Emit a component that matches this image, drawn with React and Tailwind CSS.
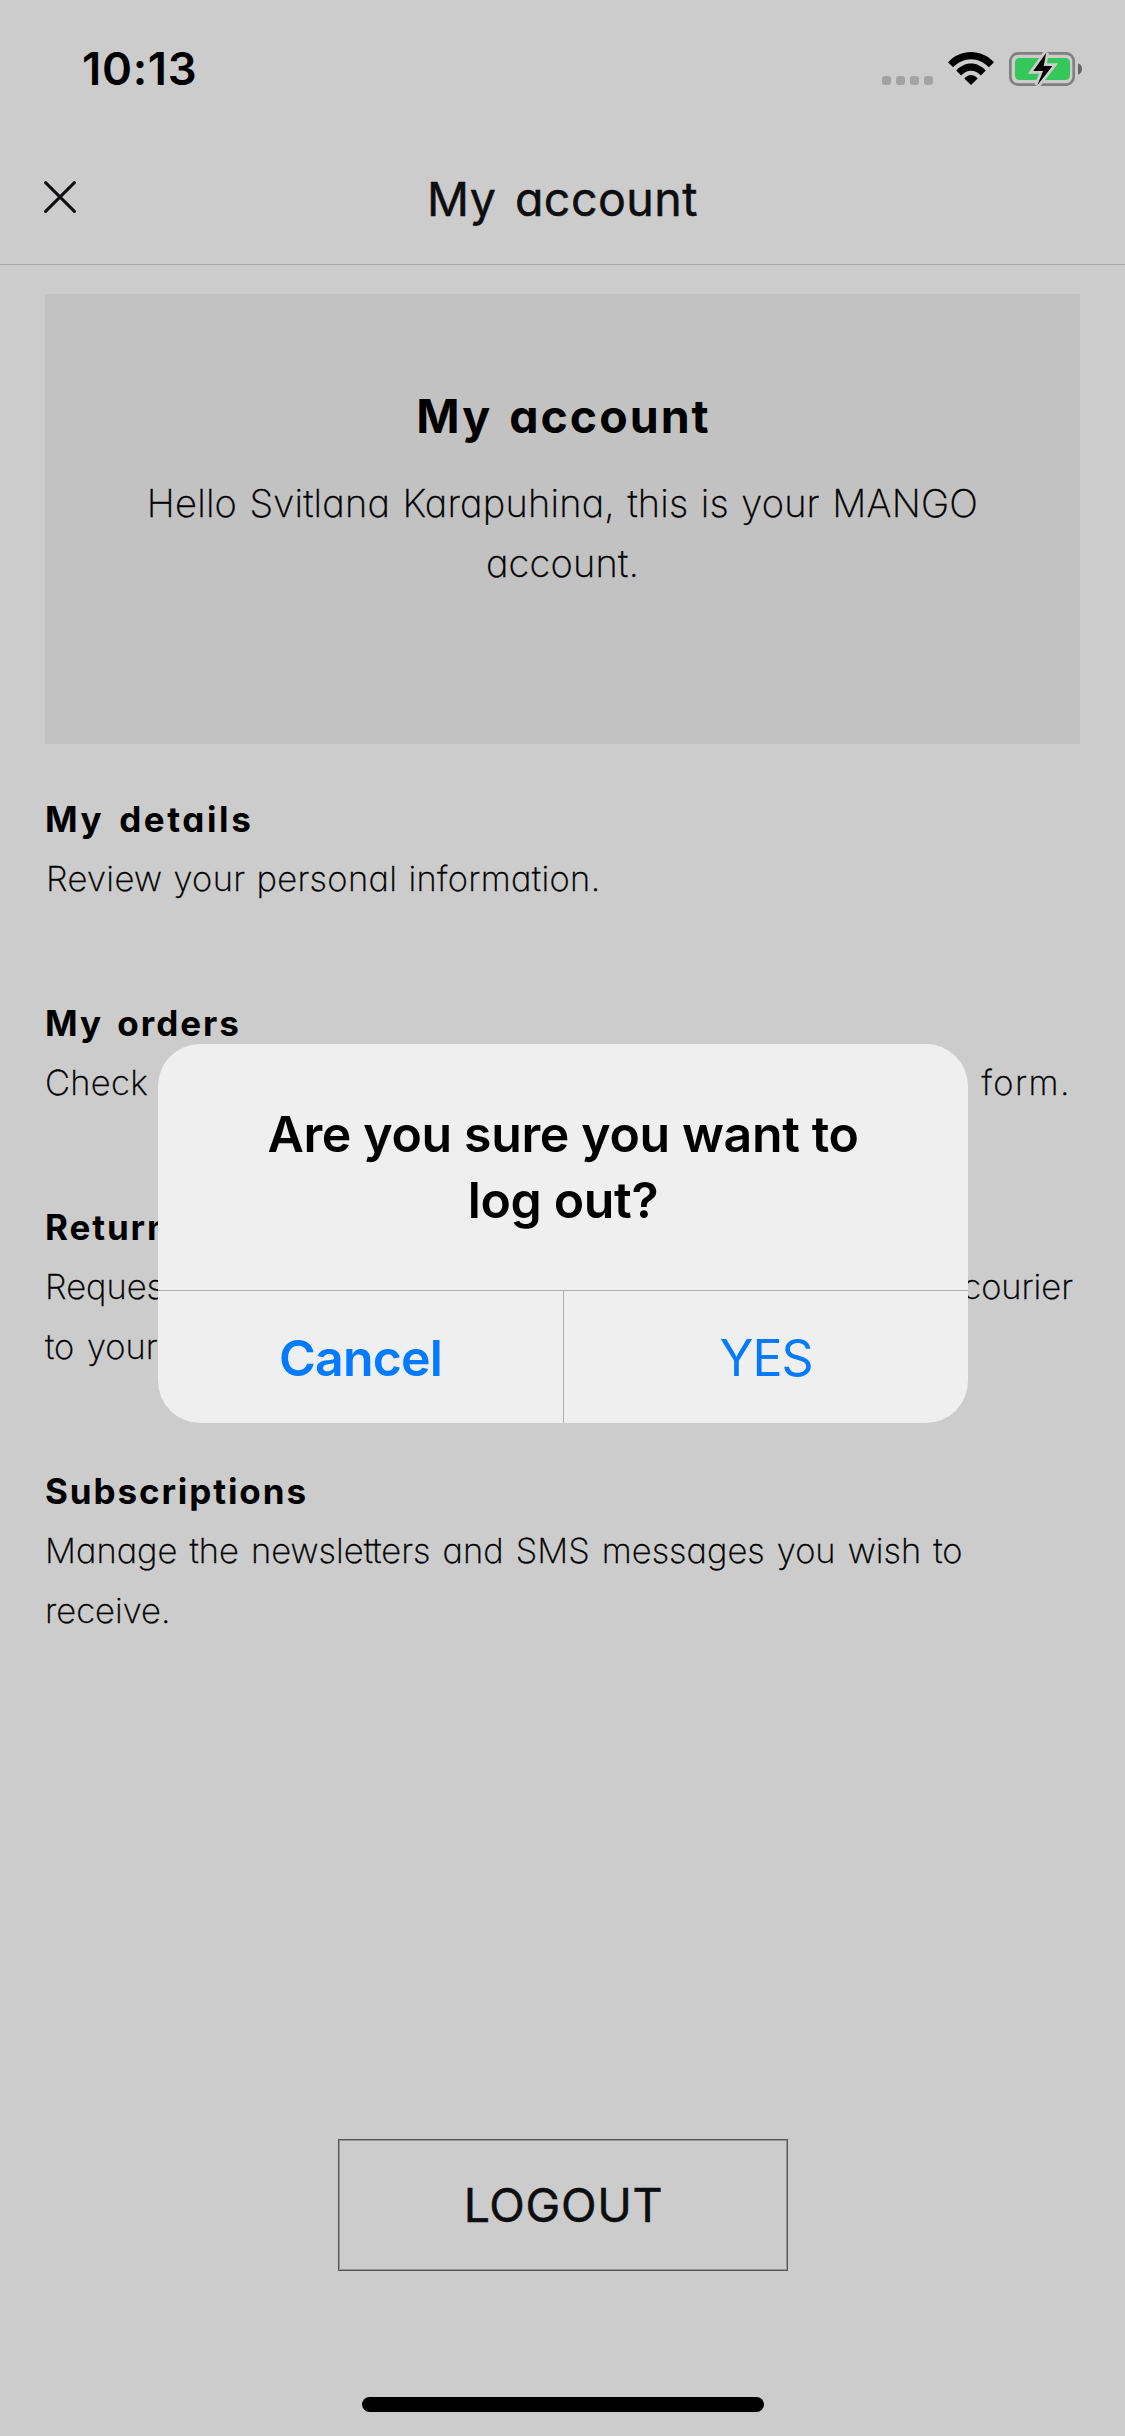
const brand = "font-['Inter','Liberation_Sans',sans-serif] [font-feature-settings:'cv11']";

function StatusBar() {
  return (
    <div className="flex h-[132px] items-start justify-between pl-[82px] pr-[43px]">
      <span className="mt-[42px] text-[45.5px] font-semibold leading-[54px] tracking-[0.7px] text-black">10:13</span>
      <div className="mt-[52px] flex items-start">
        <div className="mt-6 flex gap-[5px]">
          {[0, 1, 2, 3].map((dot) => (
            <span key={dot} className="size-[9px] rounded-[3px] bg-[#a3a3a3]" />
          ))}
        </div>
        <svg className="ml-[15px]" width="46" height="33" viewBox="0 0 46 33">
          <path d="M0 10.2C6.3 3.7 14.3 0 23 0s16.700 3.700 23 10.200L40.900 15.300C36.100 10.300 29.900 7.300 23 7.300S9.900 10.300 5.100 15.300Z" />
          <path d="M8.200 18.500C12.200 14.200 17.300 11.500 23 11.500s10.800 2.700 14.800 7L32.800 23.500C30.100 20.600 26.800 18.700 23 18.700s-7.100 1.900-9.800 4.800Z" />
          <path d="M16.300 26.400C18.100 24.200 20.400 22.900 23 22.900s4.900 1.300 6.700 3.500L23 33Z" />
        </svg>
        <svg className="ml-[15px]" width="73" height="34" viewBox="0 0 73 34">
          <rect x="1.300" y="1.300" width="63.400" height="31.400" rx="8" fill="none" stroke="#808080" strokeWidth="2.700" />
          <rect x="6" y="6" width="55" height="22" rx="4.500" fill="#35c759" />
          <path d="M69 11.300c2.700 1 4 3.200 4 5.700s-1.300 4.700-4 5.700Z" fill="#666666" />
          <path d="M37.200 0.800 24.200 18.900h9.900L28.200 33.600 43.500 13.900H34.700Z" stroke="#cdcdcd" strokeWidth="5.500" />
          <path d="M37.200 0.800 24.200 18.900h9.900L28.200 33.600 43.500 13.900H34.700Z" />
        </svg>
      </div>
    </div>
  );
}

function Section({ title, titleClass, children }) {
  return (
    <section className="text-[34.5px] leading-[60px]">
      <h3 className={`text-[35px] font-bold ${titleClass}`}>{title}</h3>
      {children}
    </section>
  );
}

export default function App() {
  return (
    <div className="relative flex h-[2436px] w-[1125px] flex-col overflow-hidden bg-[#cccccc] font-['Inter','Liberation_Sans',sans-serif] text-black">
      <StatusBar />

      <header className="grid h-[133px] grid-cols-[120px_1fr_120px] border-b border-[#a9a9a9] text-[#0d0e10]">
        <svg className="ml-11 mt-[49px]" width="32" height="32" viewBox="0 0 32 32" fill="none" stroke="currentColor" strokeWidth="3" strokeLinecap="round">
          <path d="M1.600 1.600 30.400 30.400M30.400 1.600 1.600 30.400" />
        </svg>
        <h1 className={`${brand} mt-[37px] text-center text-[46.5px] font-normal leading-[60px] tracking-[0.5px] [-webkit-text-stroke:0.5px] [word-spacing:5px]`}>My account</h1>
      </header>

      <main className={`${brand} flex flex-1 flex-col px-[45px] font-extralight`}>
        <div className="mt-[29px] h-[450px] bg-[#c2c2c2] pt-[92px] text-center leading-[60px]">
          <h2 className="pl-0.5 text-[46.5px] font-bold tracking-[2px] [word-spacing:4px]">My account</h2>
          <p className="mt-[27px] text-[38px] tracking-[0.2px] [-webkit-text-stroke:0.35px] [word-spacing:1.5px]">
            Hello Svitlana Karapuhina, this is your MANGO
            <br />
            account.
          </p>
        </div>

        <div className="mt-[45px] flex flex-col gap-[84px]">
          <Section title="My details" titleClass="tracking-[2.6px] [word-spacing:4px]">
            <p className="pl-px tracking-[0.35px] [-webkit-text-stroke:0.35px] [word-spacing:1px]">Review your personal information.</p>
          </Section>
          <Section title="My orders" titleClass="tracking-[2px] [word-spacing:4px]">
            <p className="flex justify-between pr-[9px] [-webkit-text-stroke:0.35px]">
              <span className="tracking-[0.3px]">Check</span>
              <span className="tracking-[1.5px]">form.</span>
            </p>
          </Section>
          <Section title="Return" titleClass="tracking-[1.9px]">
            <p className="flex justify-between pr-[7px] [-webkit-text-stroke:0.35px]">
              <span>Reques</span>
              <span>courier</span>
            </p>
            <p className="[-webkit-text-stroke:0.35px] [word-spacing:3px]">to your</p>
          </Section>
          <Section title="Subscriptions" titleClass="tracking-[1.9px]">
            <p className="tracking-[0.03px] [-webkit-text-stroke:0.35px] [word-spacing:2.3px]">
              Manage the newsletters and SMS messages you wish to
              <br />
              receive.
            </p>
          </Section>
        </div>
      </main>

      <footer className="flex h-[297px] flex-col items-center">
        <button className={`${brand} h-[132px] w-[450px] shrink-0 border border-[#555555] pl-0.5 text-[46.5px] font-normal leading-[60px] tracking-[0.7px] text-[#0d0e10] shadow-[inset_0_0_0_1px_#979797] [-webkit-text-stroke:0.5px]`}>
          LOGOUT
        </button>
        <div className="mt-[126px] h-[15px] w-[402px] shrink-0 rounded-full bg-black" />
      </footer>

      <div role="dialog" className="absolute left-[158px] top-[1044px] flex h-[379px] w-[810px] flex-col overflow-hidden rounded-[42px] bg-[#efefef]">
        <h2 className="h-[246px] pt-[57px] text-center text-[50px] font-semibold leading-[66px] tracking-[-0.35px]">
          Are you sure you want to
          <br />
          log out?
        </h2>
        <div className="grid h-[133px] grid-cols-2 border-t border-[#b0b0b0] text-[50px] leading-[60px] text-[#047aff]">
          <button className="pt-0.5 font-semibold tracking-[-0.8px]">Cancel</button>
          <button className="border-l border-[#b0b0b0] pt-0.5 tracking-[-1px]">YES</button>
        </div>
      </div>
    </div>
  );
}
